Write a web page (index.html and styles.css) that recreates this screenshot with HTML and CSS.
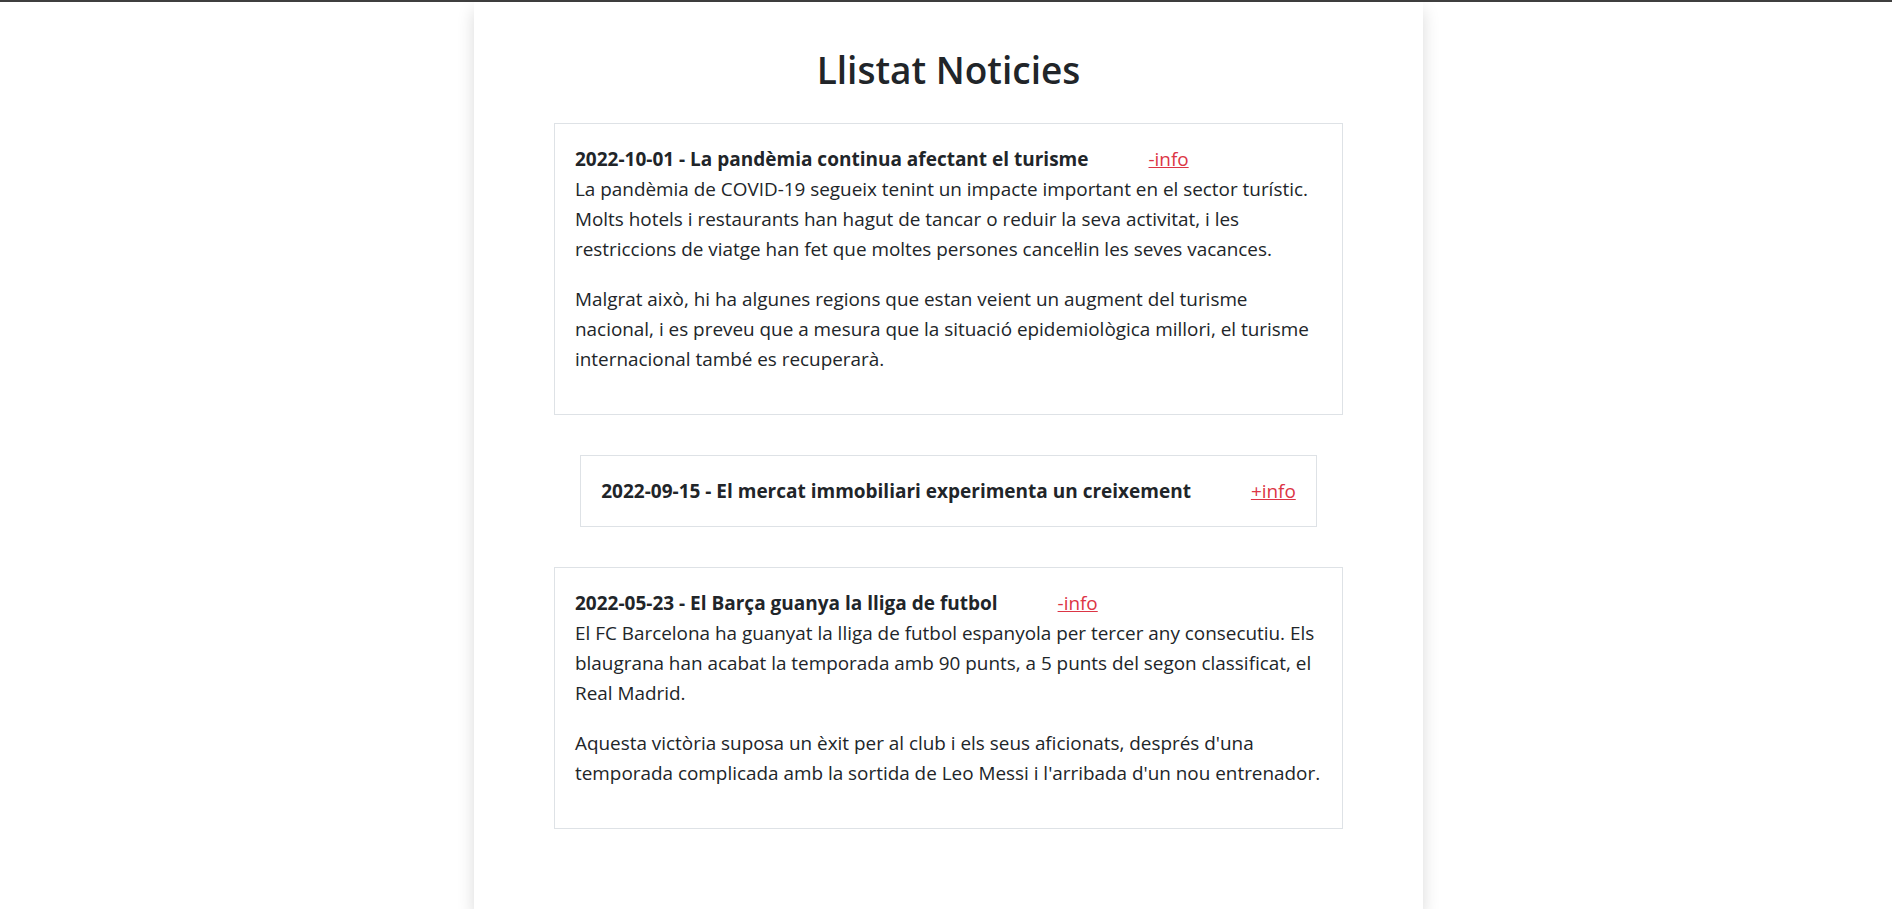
FILE: index.html
```html
<!DOCTYPE html>
<html lang="ca">
<head>
<meta charset="utf-8">
<title>Llistat Noticies</title>
<link rel="stylesheet" href="styles.css">
</head>
<body>
<div class="topbar"></div>
<main class="page">
  <h1 class="page-title">Llistat Noticies</h1>

  <article class="news">
    <div class="news-head">
      <span class="news-title">2022-10-01 - La pandèmia continua afectant el turisme</span>
      <a class="news-toggle" href="#">-info</a>
    </div>
    <p>La pandèmia de COVID-19 segueix tenint un impacte important en el sector turístic. Molts hotels i restaurants han hagut de tancar o reduir la seva activitat, i les restriccions de viatge han fet que moltes persones cancel·lin les seves vacances.</p>
    <p>Malgrat això, hi ha algunes regions que estan veient un augment del turisme nacional, i es preveu que a mesura que la situació epidemiològica millori, el turisme internacional també es recuperarà.</p>
  </article>

  <article class="news collapsed">
    <div class="news-head">
      <span class="news-title">2022-09-15 - El mercat immobiliari experimenta un creixement</span>
      <a class="news-toggle" href="#">+info</a>
    </div>
  </article>

  <article class="news">
    <div class="news-head">
      <span class="news-title">2022-05-23 - El Barça guanya la lliga de futbol</span>
      <a class="news-toggle" href="#">-info</a>
    </div>
    <p>El FC Barcelona ha guanyat la lliga de futbol espanyola per tercer any consecutiu. Els blaugrana han acabat la temporada amb 90 punts, a 5 punts del segon classificat, el Real Madrid.</p>
    <p>Aquesta victòria suposa un èxit per al club i els seus aficionats, després d'una temporada complicada amb la sortida de Leo Messi i l'arribada d'un nou entrenador.</p>
  </article>
</main>
</body>
</html>
```

FILE: styles.css
```css
* {
  box-sizing: border-box;
}

html, body {
  margin: 0;
  padding: 0;
  background: #ffffff;
}

body {
  padding-left: 5px;
  font-family: "Open Sans", "Noto Sans", "Liberation Sans", sans-serif;
  font-size: 18.9px;
  line-height: 30px;
  color: #212529;
}

.topbar {
  height: 2px;
  background: #3f3f3f;
  margin-left: -5px;
}

.page {
  width: 949px;
  margin: 0 auto;
  padding: 44px 80px 40px;
  background: #ffffff;
  box-shadow: 0 8px 16px rgba(0, 0, 0, 0.15);
}

.page-title {
  margin: 0 0 29px;
  text-align: center;
  font-size: 37px;
  line-height: 48px;
  font-weight: 600;
  color: #212529;
}

.news {
  width: fit-content;
  max-width: 100%;
  margin: 0 auto 40px;
  padding: 20px;
  border: 1px solid #dee2e6;
  background: #ffffff;
}

.news-head {
  display: flex;
  align-items: baseline;
}

.news-title {
  font-size: 19px;
  font-weight: 700;
}

.news-toggle {
  margin-left: 60px;
  color: #dc3545;
  text-decoration: underline;
}

.news p {
  margin: 0 0 20px;
}
```
